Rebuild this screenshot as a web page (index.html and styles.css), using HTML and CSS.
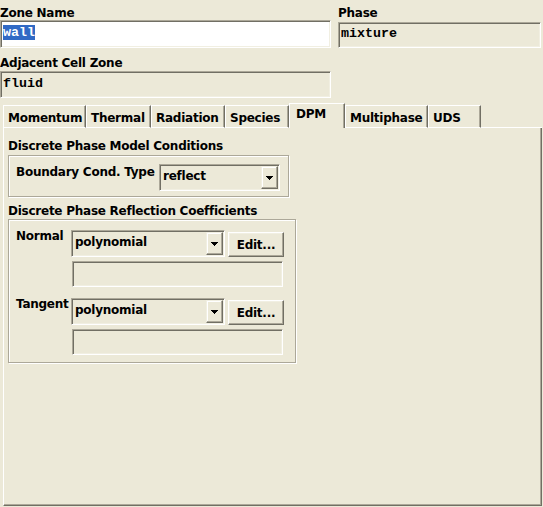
FILE: index.html
```html
<!DOCTYPE html>
<html>
<head>
<meta charset="utf-8">
<link rel="stylesheet" href="styles.css">
</head>
<body>
<div class="page">
  <div class="top">
    <div class="col">
      <div class="lbl">Zone Name</div>
      <div class="field zone"><span class="sel">wall</span></div>
    </div>
    <div class="col">
      <div class="lbl">Phase</div>
      <div class="field phase">mixture</div>
    </div>
    <div class="col">
      <div class="lbl">Adjacent Cell Zone</div>
      <div class="field adj">fluid</div>
    </div>
  </div>

  <div class="tabs">
    <div class="tab t-mom">Momentum</div>
    <div class="tab t-the">Thermal</div>
    <div class="tab t-rad">Radiation</div>
    <div class="tab t-spe">Species</div>
    <div class="tab active t-dpm">DPM</div>
    <div class="tab t-mul">Multiphase</div>
    <div class="tab t-uds">UDS</div>
    <div class="tab-fill"></div>
  </div>

  <div class="panel">
    <div class="glabel">Discrete Phase Model Conditions</div>
    <div class="group g1">
      <div class="blabel">Boundary Cond. Type</div>
      <div class="combo c-bound">
        <div class="ctext">reflect</div>
        <div class="arrow"><svg width="7" height="4" viewBox="0 0 7 4" shape-rendering="crispEdges"><path d="M0 0h7v1h-1v1h-1v1h-1v1h-1v-1h-1v-1h-1v-1h-1z" fill="#000"/></svg></div>
      </div>
    </div>

    <div class="glabel gl2">Discrete Phase Reflection Coefficients</div>
    <div class="group g2">
      <div class="crow">
        <div class="clabel">Normal</div>
        <div class="ccol">
          <div class="cline">
            <div class="combo c-wide">
              <div class="ctext">polynomial</div>
              <div class="arrow"><svg width="7" height="4" viewBox="0 0 7 4" shape-rendering="crispEdges"><path d="M0 0h7v1h-1v1h-1v1h-1v1h-1v-1h-1v-1h-1v-1h-1z" fill="#000"/></svg></div>
            </div>
            <div class="btn">Edit...</div>
          </div>
          <div class="field2"></div>
        </div>
      </div>
      <div class="crow r2">
        <div class="clabel">Tangent</div>
        <div class="ccol">
          <div class="cline">
            <div class="combo c-wide">
              <div class="ctext">polynomial</div>
              <div class="arrow"><svg width="7" height="4" viewBox="0 0 7 4" shape-rendering="crispEdges"><path d="M0 0h7v1h-1v1h-1v1h-1v1h-1v-1h-1v-1h-1v-1h-1z" fill="#000"/></svg></div>
            </div>
            <div class="btn">Edit...</div>
          </div>
          <div class="field2"></div>
        </div>
      </div>
    </div>
  </div>
</div>
</body>
</html>
```

FILE: styles.css
```css
* { box-sizing: border-box; }
html, body { margin: 0; padding: 0; }
body {
  background: #ece9d8;
  width: 543px;
  height: 507px;
  overflow: hidden;
  font-family: "DejaVu Sans", Verdana, sans-serif;
  font-weight: bold;
  font-size: 12px;
  line-height: 14px;
  letter-spacing: -0.25px;
  color: #000;
}
.page { padding-top: 6px; }

.top {
  display: grid;
  grid-template-columns: 331px 203px;
  column-gap: 7px;
  row-gap: 8px;
}
.lbl { height: 14px; white-space: nowrap; }

.field {
  border: 1px solid;
  border-color: #aca899 #fff #fff #aca899;
  box-shadow: inset 1px 1px 0 #716f64, inset -1px -1px 0 #f1efe2;
  font-family: "Liberation Mono", "DejaVu Sans Mono", monospace;
  font-weight: bold;
  font-size: 13.33px;
  line-height: 15px;
  letter-spacing: 0;
  padding-left: 2px;
  white-space: nowrap;
}
.zone { background: #fff; height: 28px; padding-top: 4px; }
.sel { background: #316ac5; color: #fff; }
.phase { height: 26px; margin-top: 2px; padding-top: 3px; }
.adj { height: 27px; margin-top: 1px; padding-top: 4px; }

.tabs {
  display: flex;
  align-items: flex-end;
  margin: 5px 0 0 3px;
  width: 539px;
  height: 25px;
}
.tab {
  height: 23px;
  padding: 5px 0 0 4px;
  border-top: 1px solid #fff;
  border-left: 1px solid #fff;
  border-right: 1px solid #716f64;
  border-bottom: 1px solid #fff;
  box-shadow: inset -1px 0 0 #aca899;
  white-space: nowrap;
}
.tab.active {
  height: 25px;
  padding: 3px 0 0 6px;
  border-bottom: none;
}
.t-mom { width: 83px; }
.t-the { width: 65px; }
.t-rad { width: 74px; }
.t-spe { width: 64px; }
.t-dpm { width: 56px; }
.t-mul { width: 83px; }
.t-uds { width: 53px; }
.tab-fill { flex: 1; height: 1px; background: #fff; }

.panel {
  margin-left: 3px;
  width: 539px;
  height: 378px;
  border-left: 1px solid #fff;
  border-right: 1px solid #716f64;
  border-bottom: 1px solid #716f64;
  box-shadow: inset -1px -1px 0 #aca899;
  padding: 11px 0 0 4px;
}
.glabel { height: 14px; white-space: nowrap; }
.gl2 { margin-top: 7px; }

.group {
  border: 1px solid #aca899;
  box-shadow: inset 1px 1px 0 #fff, 1px 1px 0 #fff;
}
.g1 {
  margin-top: 2px;
  width: 281px;
  height: 42px;
  padding: 8px 8px 0 7px;
  display: flex;
  align-items: flex-start;
}
.blabel { width: 143px; margin-top: 1px; white-space: nowrap; }

.combo {
  display: flex;
  height: 27px;
  border: 1px solid;
  border-color: #aca899 #fff #fff #aca899;
  box-shadow: inset 1px 1px 0 #716f64, inset -1px -1px 0 #f1efe2;
  padding: 1px;
}
.c-bound { width: 121px; }
.c-wide { width: 154px; }
.ctext { flex: 1; padding: 3px 0 0 2px; white-space: nowrap; }
.arrow {
  width: 17px;
  display: flex;
  align-items: center;
  justify-content: center;
  border: 1px solid;
  border-color: #f1efe2 #716f64 #716f64 #f1efe2;
  box-shadow: inset -1px -1px 0 #aca899, inset 1px 1px 0 #fff;
}
.arrow svg { display: block; }

.g2 {
  margin-top: 1px;
  width: 288px;
  height: 144px;
  padding: 10px 11px 0 7px;
  display: flex;
  flex-direction: column;
  gap: 11px;
}
.crow { display: flex; align-items: flex-start; }
.clabel { width: 56px; margin-top: -1px; white-space: nowrap; }
.ccol { display: flex; flex-direction: column; gap: 4px; }
.cline { display: flex; align-items: flex-start; gap: 3px; }
.btn {
  width: 56px;
  height: 25px;
  margin-top: 2px;
  display: flex;
  align-items: center;
  justify-content: center;
  border: 1px solid;
  border-color: #fff #716f64 #716f64 #fff;
  box-shadow: inset -1px -1px 0 #aca899, inset 1px 1px 0 #f1efe2;
}
.field2 {
  margin-left: 1px;
  width: 211px;
  height: 26px;
  border: 1px solid;
  border-color: #aca899 #fff #fff #aca899;
  box-shadow: inset 1px 1px 0 #716f64, inset -1px -1px 0 #f1efe2;
}
```
